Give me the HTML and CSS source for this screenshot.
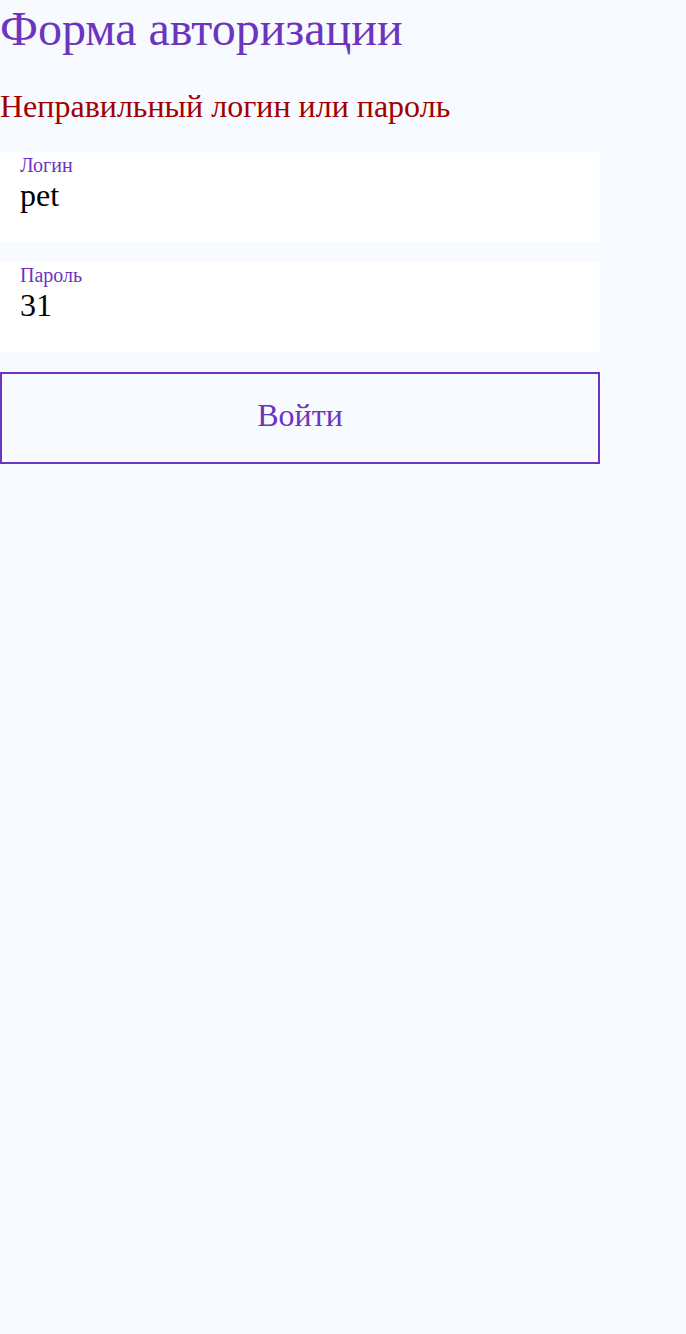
FILE: index.html
```html
<!DOCTYPE html>
<html lang="ru">
<head>
<meta charset="utf-8">
<title>Форма авторизации</title>
<link rel="stylesheet" href="styles.css">
</head>
<body>
<main class="page">
  <h1 class="title">Форма авторизации</h1>
  <p class="error">Неправильный логин или пароль</p>
  <form class="form">
    <div class="field">
      <div class="field-label">Логин</div>
      <div class="field-value">pet</div>
    </div>
    <div class="field">
      <div class="field-label">Пароль</div>
      <div class="field-value">31</div>
    </div>
    <div class="submit">Войти</div>
  </form>
</main>
</body>
</html>
```

FILE: styles.css
```css
html, body {
  margin: 0;
  padding: 0;
  background: #f7faff;
}
body {
  font-family: "Liberation Serif", "Times New Roman", serif;
  min-height: 1334px;
}
.page {
  width: 600px;
  display: flex;
  flex-direction: column;
}
.title {
  margin: 0;
  padding-top: 1px;
  font-size: 48px;
  font-weight: normal;
  color: #6c35c0;
  line-height: 55px;
}
.error {
  margin: 32px 0 0;
  font-size: 32px;
  line-height: 37px;
  color: #a00000;
}
.form {
  margin-top: 27px;
  display: flex;
  flex-direction: column;
  gap: 20px;
}
.field {
  height: 90px;
  box-sizing: border-box;
  background: #ffffff;
  padding: 2px 20px 0;
}
.field-label {
  font-size: 20px;
  line-height: 23px;
  color: #6c35c0;
}
.field-value {
  font-family: "Liberation Serif", "Times New Roman", serif;
  font-size: 32px;
  line-height: 37px;
  color: #000000;
}
.submit {
  height: 92px;
  box-sizing: border-box;
  border: 2px solid #6c35c0;
  padding-bottom: 5px;
  display: flex;
  align-items: center;
  justify-content: center;
  font-size: 32px;
  color: #6c35c0;
}
```
